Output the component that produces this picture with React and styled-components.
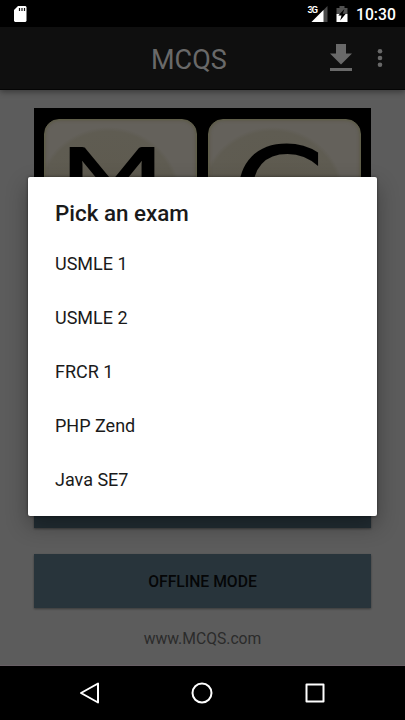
import React from "react";
import styled, { createGlobalStyle } from "styled-components";

const GlobalStyle = createGlobalStyle`
  body { margin: 0; background: #000; }
  * { box-sizing: border-box; }
`;

const Screen = styled.div`
  position: relative;
  width: 405px;
  height: 720px;
  overflow: hidden;
  display: flex;
  flex-direction: column;
  background: #5c5c5c;
  font-family: Roboto, "Liberation Sans", sans-serif;
`;

const StatusBar = styled.header`
  flex: 0 0 27px;
  display: flex;
  align-items: center;
  padding: 0 9px 0 13px;
  background: #000;
  color: #fff;
`;

const StatusIcons = styled.div`
  margin-left: auto;
  display: flex;
  align-items: center;
  gap: 8px;
`;

const Clock = styled.time`
  width: 40px;
  padding-top: 2px;
  font-size: 15.7px;
  font-weight: 500;
  line-height: 25px;
  white-space: nowrap;
`;

const AppBar = styled.div`
  flex: 0 0 63px;
  display: grid;
  grid-template-columns: 1fr 226px 1fr;
  align-items: center;
  background: #0f0f0f;
  border-bottom: 1px solid #050505;
  box-shadow: 0 2px 6px rgba(0, 0, 0, 0.38);
  z-index: 1;
`;

const AppTitle = styled.h1`
  grid-column: 2;
  margin: 0;
  padding: 4px 0 0 61.5px;
  font-size: 27px;
  font-weight: 400;
  line-height: 32px;
  color: #696969;
`;

const Actions = styled.div`
  display: flex;
  align-items: center;
  gap: 24px;
  padding-left: 13px;
`;

const Content = styled.main`
  flex: 1;
  padding: 18px 34px 0;
  border-bottom: 1px solid #685f65;
  display: flex;
  flex-direction: column;
  align-items: stretch;
`;

const Logo = styled.div`
  height: 338px;
  flex: none;
  background: #000;
  display: grid;
  grid-template-columns: 153px 153px;
  grid-auto-rows: 153px;
  gap: 11px;
  padding: 11px 0 0 10px;
`;

const Tile = styled.div`
  border-radius: 15px;
  border: 1px solid #5f5e49;
  background: radial-gradient(ellipse 73px 73px at 42% 53%, #5e5a4e 0, #5f5c52 94%, #64615b 100%);
  box-shadow: inset 0 0 3px 1px #5d5a4a;
  overflow: hidden;
  color: #000;
`;

const LetterM = styled.div`
  padding-left: 16px;
  font: 700 108px/151px Lato, sans-serif;
  transform-origin: 0 36px;
  transform: translateY(-11px) scaleY(0.66);
`;

const LetterC = styled.div`
  padding-left: 22px;
  font: 130px/151px "DejaVu Sans", sans-serif;
  transform-origin: 22px 0;
  transform: scaleX(1.04);
`;

const Button = styled.button`
  flex: none;
  height: 54px;
  margin: ${(p) => p.$gap}px 0 0;
  padding: 1px 0 0;
  border: 0;
  background: ${(p) => (p.$shaded ? "#222d33" : "#28343b")};
  box-shadow: 0 1px 2px rgba(0, 0, 0, 0.38);
  font: 500 15.7px/53px Roboto, sans-serif;
  color: #050607;
`;

const Site = styled.div`
  margin-top: 21px;
  text-align: center;
  font-size: 15.7px;
  line-height: 20px;
  color: #2b2b2b;
`;

const NavBar = styled.nav`
  flex: 0 0 54px;
  display: flex;
  align-items: center;
  justify-content: center;
  gap: 88.5px;
  padding-right: 0.5px;
  background: #000;
`;

const Dialog = styled.section`
  position: absolute;
  z-index: 2;
  left: 28px;
  top: 177px;
  width: 349px;
  height: 339px;
  padding-top: 20px;
  background: #fff;
  border-radius: 2px;
  box-shadow: 0 9px 22px rgba(0, 0, 0, 0.32), 0 0 3px rgba(0, 0, 0, 0.5);
`;

const DialogTitle = styled.h2`
  margin: 0 27px;
  font-size: 22.4px;
  font-weight: 500;
  line-height: 33px;
  color: #1a1a1a;
`;

const Options = styled.ul`
  margin: 7px 0 0;
  padding: 0;
  list-style: none;
`;

const Option = styled.li`
  height: 54px;
  padding: 16px 27px;
  font-size: 18px;
  line-height: 22px;
  color: #1a1a1a;
`;

const exams = ["USMLE 1", "USMLE 2", "FRCR 1", "PHP Zend", "Java SE7"];

const SdCard = () => (
  <svg width="14" height="18" viewBox="0 0 14 18">
    <path d="M5 1h7.5l1 1v14l-1 1H2l-1-1V5z" fill="#fff" />
    <path d="M6.5 3v3M9 3v3M11.5 3v3" stroke="#111" strokeWidth="1.2" />
  </svg>
);

const Signal = () => (
  <svg width="21" height="18" viewBox="0 0 21 18">
    <path d="M20.5 1v16H4.5z" fill="#494949" />
    <path d="M16.5 5v12H4.5z" fill="#fff" />
    <text x="0.5" y="8" fill="#fff" stroke="#000" strokeWidth="1" paintOrder="stroke" fontFamily="Roboto" fontSize="9.5" fontWeight="700" textLength="10.5">3G</text>
  </svg>
);

const Battery = () => (
  <svg width="12" height="18" viewBox="0 0 12 18">
    <path d="M3.5 1h5v2h3v6H.5V3h3z" fill="#515151" />
    <path d="M.5 9h11v8H.5z" fill="#fff" />
    <path d="M8.4 4L2.3 10.5h3.2L4.2 15.5 9.8 8.8H6.8z" fill="#000" />
  </svg>
);

const Download = () => (
  <svg width="24" height="30" viewBox="0 0 24 30">
    <path d="M7 1h10v9.5h6L12 21.5 1 10.5h6zM1 25h22v3H1z" fill="#696969" />
  </svg>
);

const More = () => (
  <svg width="6" height="20" viewBox="0 0 6 20" fill="#696969">
    <circle cx="3" cy="3.2" r="2.3" />
    <circle cx="3" cy="10" r="2.3" />
    <circle cx="3" cy="16.8" r="2.3" />
  </svg>
);

const NavIcon = ({ children }) => (
  <svg width="24" height="24" viewBox="0 0 24 24" fill="none" stroke="#fff" strokeWidth="2" strokeLinejoin="round">
    {children}
  </svg>
);

export default function App() {
  return (
    <Screen>
      <GlobalStyle />
      <StatusBar>
        <SdCard />
        <StatusIcons>
          <Signal />
          <Battery />
          <Clock>10:30</Clock>
        </StatusIcons>
      </StatusBar>
      <AppBar>
        <AppTitle>MCQS</AppTitle>
        <Actions>
          <Download />
          <More />
        </Actions>
      </AppBar>
      <Content>
        <Logo>
          <Tile><LetterM>M</LetterM></Tile>
          <Tile><LetterC>C</LetterC></Tile>
        </Logo>
        <Button $gap={28} $shaded aria-label="Online mode" />
        <Button $gap={26}>OFFLINE MODE</Button>
        <Site>www.MCQS.com</Site>
      </Content>
      <NavBar>
        <NavIcon><path d="M20 2.5v19L3 12z" /></NavIcon>
        <NavIcon><circle cx="12" cy="12" r="9.5" /></NavIcon>
        <NavIcon><path d="M3.5 3.5h17v17h-17z" /></NavIcon>
      </NavBar>
      <Dialog role="dialog" aria-label="Pick an exam">
        <DialogTitle>Pick an exam</DialogTitle>
        <Options>
          {exams.map((exam) => <Option key={exam}>{exam}</Option>)}
        </Options>
      </Dialog>
    </Screen>
  );
}
